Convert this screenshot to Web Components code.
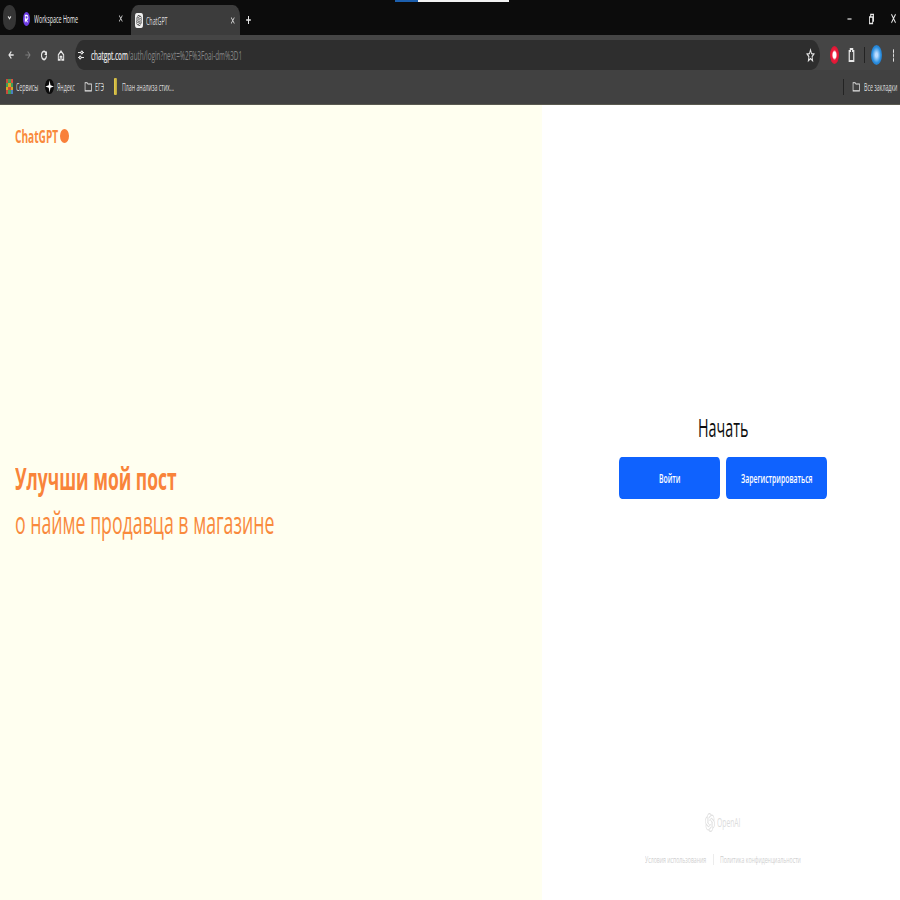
<!DOCTYPE html>
<html lang="ru">
<head>
<meta charset="utf-8">
<title>ChatGPT</title>
<style>
html,body{margin:0;padding:0;width:900px;height:900px;overflow:hidden;background:#fff}
</style>
</head>
<body>
<app-root>
  <browser-chrome></browser-chrome>
  <page-split>
    <promo-pane></promo-pane>
    <auth-pane></auth-pane>
  </page-split>
</app-root>
<script>
const KNOT = "M22.2819 9.8211a5.9847 5.9847 0 0 0-.5157-4.9108 6.0462 6.0462 0 0 0-6.5098-2.9A6.0651 6.0651 0 0 0 4.9807 4.1818a5.9847 5.9847 0 0 0-3.9977 2.9 6.0462 6.0462 0 0 0 .7427 7.0966 5.98 5.98 0 0 0 .511 4.9107 6.051 6.051 0 0 0 6.5146 2.9001A5.9847 5.9847 0 0 0 13.2599 24a6.0557 6.0557 0 0 0 5.7718-4.2058 5.9894 5.9894 0 0 0 3.9977-2.9001 6.0557 6.0557 0 0 0-.7475-7.0729zm-9.022 12.6081a4.4755 4.4755 0 0 1-2.8764-1.0408l.1419-.0804 4.7783-2.7582a.7948.7948 0 0 0 .3927-.6813v-6.7369l2.02 1.1686a.071.071 0 0 1 .038.052v5.5826a4.504 4.504 0 0 1-4.4945 4.4944zm-9.6607-4.1254a4.4708 4.4708 0 0 1-.5346-3.0137l.142.0852 4.783 2.7582a.7712.7712 0 0 0 .7806 0l5.8428-3.3685v2.3324a.0804.0804 0 0 1-.0332.0615L9.74 19.9502a4.4992 4.4992 0 0 1-6.1408-1.6464zM2.3408 7.8956a4.485 4.485 0 0 1 2.3655-1.9728V11.6a.7664.7664 0 0 0 .3879.6765l5.8144 3.3543-2.0201 1.1685a.0757.0757 0 0 1-.071 0l-4.8303-2.7865A4.504 4.504 0 0 1 2.3408 7.872zm16.5963 3.8558L13.1038 8.364 15.1192 7.2a.0757.0757 0 0 1 .071 0l4.8303 2.7913a4.4944 4.4944 0 0 1-.6765 8.1042v-5.6772a.79.79 0 0 0-.407-.667zm2.0107-3.0231l-.142-.0852-4.7735-2.7818a.7759.7759 0 0 0-.7854 0L9.409 9.2297V6.8974a.0662.0662 0 0 1 .0284-.0615l4.8303-2.7866a4.4992 4.4992 0 0 1 6.6802 4.66zM8.3065 12.863l-2.02-1.1638a.0804.0804 0 0 1-.038-.0567V6.0742a4.4992 4.4992 0 0 1 7.3757-3.4537l-.142.0805L8.704 5.459a.7948.7948 0 0 0-.3927.6813zm1.0976-2.3654l2.602-1.4998 2.6069 1.4998v2.9994l-2.5974 1.4997-2.6067-1.4997Z";

function define(name, css, html) {
  customElements.define(name, class extends HTMLElement {
    constructor() {
      super();
      this.attachShadow({mode:'open'}).innerHTML = `<style>${css}</style>${typeof html === 'function' ? html(this) : html}`;
    }
  });
}

define('app-root', `
  :host{display:flex;flex-direction:column;width:900px;height:900px;overflow:hidden;font-family:"Open Sans","Noto Sans",sans-serif}
`, `<slot></slot>`);

define('page-split', `
  :host{display:flex;flex:1;min-height:0}
`, `<slot></slot>`);

const ICON = {
  back:'<path d="M13 5l-7 7 7 7M6 12h14" fill="none" stroke="currentColor" stroke-width="3"/>',
  fwd:'<path d="M11 5l7 7-7 7M18 12H4" fill="none" stroke="currentColor" stroke-width="2.4"/>',
  reload:'<path d="M18.5 8A7.5 7.5 0 1 0 19.5 12" fill="none" stroke="currentColor" stroke-width="3.4"/><path d="M21 3v8h-8z" fill="currentColor"/>',
  home:'<path d="M4 11l8-7 8 7v9h-5.5v-6h-5v6H4z" fill="none" stroke="currentColor" stroke-width="3"/>',
  tune:'<path d="M3 7h9M17 7h4M3 17h4M12 17h9" stroke="currentColor" stroke-width="2.4" fill="none"/><circle cx="14.5" cy="7" r="2.8" fill="none" stroke="currentColor" stroke-width="2.4"/><circle cx="9.5" cy="17" r="2.8" fill="none" stroke="currentColor" stroke-width="2.4"/>',
  star:'<path d="M12 3l2.7 6 6.3.6-4.8 4.2 1.5 6.4L12 16.8 6.3 20.2l1.5-6.4L3 9.6 9.3 9z" fill="none" stroke="currentColor" stroke-width="2.4"/>',
  folder:'<path d="M3 5h6l2 2.5h10V20H3z" fill="none" stroke="currentColor" stroke-width="2"/>',
  puzzle:'<path d="M6 6h3V3h6v3h3v15H6z" fill="none" stroke="currentColor" stroke-width="3.2"/>',
  dots:'<circle cx="12" cy="4" r="4" fill="currentColor"/><circle cx="12" cy="12" r="4" fill="currentColor"/><circle cx="12" cy="20" r="4" fill="currentColor"/>',
  chev:'<path d="M5 8l7 8 7-8" fill="none" stroke="currentColor" stroke-width="4.5"/>',
  restore:'<path d="M5 8h11v13H5zM9 8V3h10v13h-3" fill="none" stroke="currentColor" stroke-width="3"/>',
  close:'<path d="M5 4l14 16M19 4L5 20" fill="none" stroke="currentColor" stroke-width="3"/>',
  plus:'<path d="M12 4v16M4 12h16" fill="none" stroke="currentColor" stroke-width="3.4"/>',
  min:'<path d="M5 12h14" fill="none" stroke="currentColor" stroke-width="2.4"/>'
};

define('ui-icon', `
  :host{display:inline-flex;flex:none;width:var(--w,8px);height:var(--h,12px);color:var(--c,#e8e8e8)}
  svg{width:100%;height:100%;display:block}
`, el => `<svg viewBox="0 0 24 24" preserveAspectRatio="none">${ICON[el.getAttribute('name')]||''}</svg>`);

define('browser-tab', `
  :host{display:flex;align-items:center;box-sizing:border-box;height:30px;color:#ececec;font-size:11px;--sx:.486}
  :host([active]){background:#3c3c3c;color:#dcdcdc;border-radius:7px 7px 0 0/11px 11px 0 0}
  .t{flex:1;min-width:0;white-space:nowrap}
`, `<slot name="fav"></slot><span class="t"><slot></slot></span><ui-icon name="close" style="--w:5.5px;--h:9px"></ui-icon>`);

define('bookmark-item', `
  :host{display:inline-flex;align-items:center;gap:3px;font-size:10.5px;--sx:.5;color:#dedede;white-space:nowrap}
`, `<slot name="i"></slot><slot></slot>`);

define('browser-chrome', `
  :host{display:block;flex:none;height:105px;background:#414141;color:#e8e8e8;position:relative}
  .strip{height:35px;background:#0c0c0c;box-sizing:border-box;padding:5px 0 0 3px;display:flex;align-items:flex-start;position:relative}
  .sw{flex:none;width:13px;height:25px;background:#353535;border-radius:6px/10px;display:flex;align-items:center;justify-content:center}
  .t1{width:114px;margin-left:1px;padding:0 8px 0 6px;height:27px}
  .t2{width:109px;padding:0 5px 0 4px}
  .plus{margin:9px 0 0 5px}
  .win{margin-left:auto;display:flex;align-items:center;gap:15px;padding:7px 3.5px 0 0}
  .cap{position:absolute;left:395px;top:0;width:114px;height:1.5px;background:linear-gradient(90deg,#1c5fae 0 23px,#f2f2f2 23px)}
  .tool{height:35px;box-sizing:border-box;display:flex;align-items:flex-end;background:#454545}
  .nav{display:flex;align-items:center;gap:8.7px;padding:0 0 0 7px;flex:none;width:75px;height:30px;box-sizing:border-box}
  .omni{flex:none;width:745px;height:30px;background:#2e2e2e;border-radius:9px/15px;display:flex;align-items:center;box-sizing:border-box;padding:0 5px 0 2px;gap:6px;font-size:12.4px;--sx:.513}
  .url{flex:1;min-width:0;white-space:nowrap;color:#858585}
  .url b{font-weight:400;color:#ececec;-webkit-text-stroke:.2px #ececec}
  .ext{display:flex;align-items:center;height:30px;padding-left:9.5px}
  .sep{width:1px;height:16px;background:#232323;flex:none}
  .oval{width:9px;height:18px;border-radius:50%;background:radial-gradient(ellipse at center,#fff 0 24%,#ee1d3c 40%,#c80f2c);flex:none}
  .avatar{width:11px;height:20px;border-radius:50%;background:radial-gradient(ellipse at center,#bcdcff 0 14%,#2b8fe0 55%,#17599e);flex:none}
  .marks{height:35px;box-sizing:border-box;display:flex;align-items:center;padding:0 3px 1px 6px;background:#414141;border-bottom:1px solid #5a5a50}
  .marks .end{margin:0 0 0 auto;display:flex;align-items:center;gap:8px}
  .apps{display:grid;grid-template-columns:repeat(3,1fr);grid-auto-rows:1fr;width:7px;height:15px}
  .ya{width:8.5px;height:15px;background:#0c0c0c;border-radius:50%;display:block;position:relative}
  .ya::after{content:"";position:absolute;inset:0;background:#fff;clip-path:polygon(50% 8%,60% 42%,100% 50%,60% 58%,50% 92%,40% 58%,0 50%,40% 42%)}
  .bar{width:2.5px;height:17px;background:linear-gradient(90deg,#e8cf4e,#b7a33a);border-radius:1px}
  .fav-w{width:7px;height:14px;border-radius:50%;background:#6c3be4;display:flex;align-items:center;justify-content:center;margin-right:4px;flex:none}
  .fav-w svg{width:5px;height:9px;display:block}
  .fav-g{width:8px;height:15px;border-radius:2px/3px;background:#f0f0f0;display:flex;align-items:center;justify-content:center;margin-right:3px;flex:none}
  .fav-g svg{width:6px;height:11px;fill:#333;display:block}
`, `
  <div class="strip">
    <div class="cap"></div>
    <div class="sw"><ui-icon name="chev" style="--w:5px;--h:7px"></ui-icon></div>
    <browser-tab class="t1"><span slot="fav" class="fav-w"><svg viewBox="0 0 24 24" preserveAspectRatio="none"><path d="M6 22V4h8a5 5 0 0 1 0 10H8l9 8" fill="none" stroke="#fff" stroke-width="4"/></svg></span><sq-t>Workspace Home</sq-t></browser-tab>
    <browser-tab active class="t2"><span slot="fav" class="fav-g"><svg viewBox="0 0 24 24" preserveAspectRatio="none"><path d="${KNOT}"/></svg></span><sq-t>ChatGPT</sq-t></browser-tab>
    <ui-icon class="plus" name="plus" style="--w:7px;--h:12px"></ui-icon>
    <div class="win">
      <ui-icon name="min" style="--w:7px;--h:12px"></ui-icon>
      <ui-icon name="restore" style="--w:7px;--h:12px"></ui-icon>
      <ui-icon name="close" style="--w:7px;--h:13px"></ui-icon>
    </div>
  </div>
  <div class="tool">
    <div class="nav">
      <ui-icon name="back" style="--w:8px;--h:12px"></ui-icon>
      <ui-icon name="fwd" style="--w:8px;--h:12px;--c:#7e7e7e"></ui-icon>
      <ui-icon name="reload" style="--w:8px;--h:13px"></ui-icon>
      <ui-icon name="home" style="--w:8px;--h:13px"></ui-icon>
    </div>
    <div class="omni">
      <ui-icon name="tune" style="--w:8px;--h:12px"></ui-icon>
      <span class="url"><sq-t><b>chatgpt.com</b>/auth/login?next=%2F%3Foai-dm%3D1</sq-t></span>
      <ui-icon name="star" style="--w:9px;--h:15px"></ui-icon>
    </div>
    <div class="ext">
      <span class="oval"></span>
      <ui-icon name="puzzle" style="--w:9px;--h:16px;margin-left:8px"></ui-icon>
      <span class="sep" style="margin-left:8px"></span>
      <span class="avatar" style="margin-left:6px"></span>
      <ui-icon name="dots" style="--w:3px;--h:13px;margin-left:10px"></ui-icon>
    </div>
  </div>
  <div class="marks">
    <bookmark-item><span slot="i" class="apps">${['#c94a3a','#3f9e57','#d8503f','#3f9e57','#d9a425','#3f9e57','#d9a425','#c94a3a','#d9a425','#c94a3a','#3f9e57','#4a7fc0'].map(c=>`<i style="background:${c}"></i>`).join('')}</span><sq-t>Сервисы</sq-t></bookmark-item>
    <bookmark-item style="margin-left:7px"><span slot="i" class="ya"></span><sq-t>Яндекс</sq-t></bookmark-item>
    <bookmark-item style="margin-left:9px"><ui-icon slot="i" name="folder" style="--w:8.5px;--h:13px"></ui-icon><sq-t>ЕГЭ</sq-t></bookmark-item>
    <bookmark-item style="margin-left:10px;gap:5px"><span slot="i" class="bar"></span><sq-t>План анализа стих...</sq-t></bookmark-item>
    <div class="end">
      <span class="sep"></span>
      <bookmark-item><ui-icon slot="i" name="folder" style="--w:8.5px;--h:13px"></ui-icon><sq-t>Все закладки</sq-t></bookmark-item>
    </div>
  </div>
`);

define('promo-pane', `
  :host{display:flex;flex-direction:column;width:542px;flex:none;background:#fffff0;color:#f98a3d;box-sizing:border-box;padding:0 15px}
  .logo{display:flex;align-items:center;gap:2px;height:61px;font-size:18px;font-weight:700;flex:none}
  .dot{width:9px;height:14px;border-radius:50%;background:#f9803a;flex:none}
  .mid{flex:1;display:flex;flex-direction:column;justify-content:center;padding-bottom:67px}
  .h{font-size:31px;font-weight:700;line-height:44px;color:#f9843a}
  .s{font-size:31.5px;font-weight:400;line-height:44px}
`, `
  <div class="logo"><sq-t>ChatGPT</sq-t><span class="dot"></span></div>
  <div class="mid">
    <div class="h"><sq-t>Улучши мой пост</sq-t></div>
    <div class="s"><sq-t>о найме продавца в магазине</sq-t></div>
  </div>
`);

define('auth-btn', `
  :host{display:flex;align-items:center;justify-content:center;width:101px;height:42px;background:#0f62fe;color:#fff;border-radius:3px/5px;font-size:12.2px;font-weight:600}
`, `<slot></slot>`);

define('auth-pane', `
  :host{display:flex;flex-direction:column;flex:1;min-width:0;box-sizing:border-box;padding-left:4px;background:#fff;color:#0d0d0d}
  .main{flex:1;display:flex;flex-direction:column;align-items:center;justify-content:center}
  h1{margin:0 0 13px;font-size:25.5px;font-weight:400;line-height:33px}
  .btns{display:flex;gap:6px}
  .foot{flex:none;height:95px;box-sizing:border-box;padding-top:6px;display:flex;flex-direction:column;align-items:center;color:#cfcfcf;font-size:9.2px}
  .oa{display:flex;align-items:center;gap:2px;font-size:12px;height:22px;color:#dcdcdc}
  .oa svg{width:10px;height:19px;fill:#e0e0e0;display:block}
  .links{display:flex;align-items:center;gap:6.5px;margin-top:20px;line-height:13px}
  .links u{text-decoration:underline}
  .links i{width:1px;height:11px;background:#ececec}
`, `
  <div class="main">
    <h1><sq-t>Начать</sq-t></h1>
    <div class="btns"><auth-btn><sq-t>Войти</sq-t></auth-btn><auth-btn><sq-t>Зарегистрироваться</sq-t></auth-btn></div>
  </div>
  <div class="foot">
    <div class="oa"><svg viewBox="0 0 24 24" preserveAspectRatio="none"><path d="${KNOT}"/></svg><sq-t>OpenAI</sq-t></div>
    <div class="links"><u><sq-t>Условия использования</sq-t></u><i></i><u><sq-t>Политика конфиденциальности</sq-t></u></div>
  </div>
`);

/* narrow text: the reference is squeezed horizontally; the host takes the squeezed width so flow layout stays true. Defined last so every parent's font is in place when it measures. */
customElements.define('sq-t', class extends HTMLElement {
  constructor() {
    super();
    this.attachShadow({mode:'open'}).innerHTML = `<style>
      :host{display:inline-block;white-space:nowrap}
      span{display:inline-block;transform:scaleX(var(--sx,.5625));transform-origin:0 50%;text-decoration:inherit}
    </style><span><slot></slot></span>`;
  }
  connectedCallback() {
    this.style.width = this.shadowRoot.querySelector('span').getBoundingClientRect().width + 'px';
  }
});
</script>
</body>
</html>
